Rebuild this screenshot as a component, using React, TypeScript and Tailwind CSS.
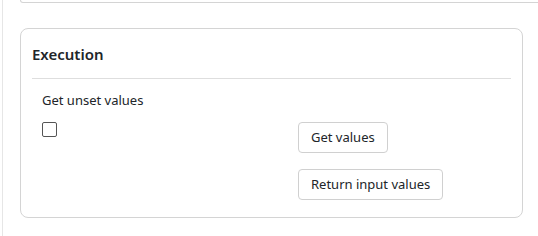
export default function App() {
  return (
    <div
      className="w-[538px] h-[236px] overflow-hidden bg-white text-[#212529]"
      style={{ fontFamily: '"Noto Sans", "Open Sans", sans-serif' }}
    >
      <div className="ml-[2px] h-full border-l border-[#e6e6e6] pl-[17px]">
        {/* tail of the card above */}
        <div className="-mr-[40px] h-[3px] rounded-b-lg border-x border-b border-[#d4d4d4]" />

        {/* Execution card */}
        <div className="mt-[25px] w-[503px] rounded-lg border border-[#d4d4d4] px-[11px] pb-[17px] pt-[15px]">
          <h3 className="pb-[14px] text-[15px] font-semibold leading-[20px]">Execution</h3>
          <div className="border-t border-[#dedede]" />
          <div className="grid grid-cols-[256px_1fr] pl-[10px] pt-[12px]">
            <div className="flex flex-col">
              <label className="text-[13px] leading-[18px]">Get unset values</label>
              <input
                type="checkbox"
                className="mt-[13px] h-[15px] w-[15px] appearance-none rounded-[2px] border border-[#555]"
              />
            </div>
            <div className="flex flex-col items-start gap-[16px] pt-[31px]">
              <button className="h-[31px] rounded-[4px] border border-[#d0d0d0] px-[12px] text-[13px]">
                Get values
              </button>
              <button className="h-[31px] rounded-[4px] border border-[#d0d0d0] px-[12px] text-[13px]">
                Return input values
              </button>
            </div>
          </div>
        </div>
      </div>
    </div>
  );
}
